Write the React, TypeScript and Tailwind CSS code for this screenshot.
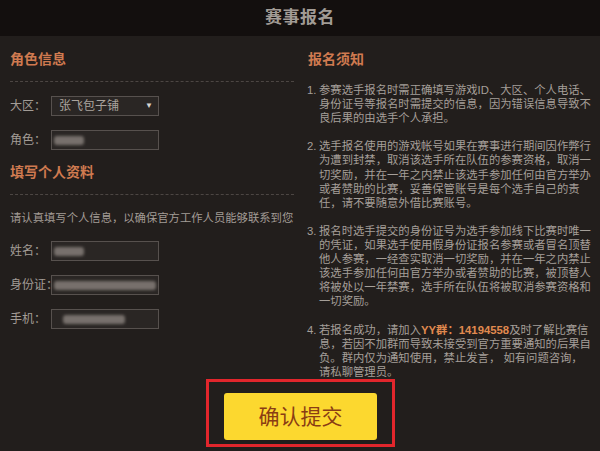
import { FC, ReactNode } from "react";

const font = "font-['Liberation_Sans','Noto_Sans_CJK_SC',sans-serif]";

const notices: ReactNode[][] = [
  [
    "参赛选手报名时需正确填写游戏ID、大区、个人电话、",
    "身份证号等报名时需提交的信息，因为错误信息导致不",
    "良后果的由选手个人承担。",
  ],
  [
    "选手报名使用的游戏帐号如果在赛事进行期间因作弊行",
    "为遭到封禁，取消该选手所在队伍的参赛资格，取消一",
    "切奖励，并在一年之内禁止该选手参加任何由官方举办",
    "或者赞助的比赛，妥善保管账号是每个选手自己的责",
    "任，请不要随意外借比赛账号。",
  ],
  [
    "报名时选手提交的身份证号为选手参加线下比赛时唯一",
    "的凭证，如果选手使用假身份证报名参赛或者冒名顶替",
    "他人参赛，一经查实取消一切奖励，并在一年之内禁止",
    "该选手参加任何由官方举办或者赞助的比赛，被顶替人",
    "将被处以一年禁赛，选手所在队伍将被取消参赛资格和",
    "一切奖励。",
  ],
  [
    <>
      若报名成功，请加入
      <span className="font-bold text-[#e08a4f]">YY群：14194558</span>
      及时了解比赛信
    </>,
    "息，若因不加群而导致未接受到官方重要通知的后果自",
    "负。群内仅为通知使用，禁止发言， 如有问题咨询，",
    "请私聊管理员。",
  ],
];

const SectionTitle: FC<{ children: ReactNode; className?: string }> = ({
  children,
  className,
}) => (
  <h3
    className={`h-[20px] text-[14px] font-bold leading-[20px] text-[#cf7a50] ${className ?? ""}`}
  >
    {children}
  </h3>
);

const Dashed: FC<{ className?: string }> = ({ className }) => (
  <div className={`border-t border-dashed border-[#4c4643] ${className ?? ""}`} />
);

const Blur: FC<{ w: number }> = ({ w }) => (
  <div
    className="h-[9px] rounded-[3px] bg-[#77706c] blur-[1.5px]"
    style={{ width: w }}
  />
);

const Field: FC<{
  label: string;
  className?: string;
  children?: ReactNode;
  h?: string;
}> = ({ label, className, children, h = "h-[20px]" }) => (
  <div className={`flex items-center ${className ?? ""}`}>
    <span className="w-[41px] whitespace-nowrap text-[12px] text-[#a29c96]">
      {label}
    </span>
    <div
      className={`relative flex ${h} w-[108px] items-center border border-[#57514e] bg-[#2a2624] px-[2px]`}
    >
      {children}
    </div>
  </div>
);

export default function App() {
  return (
    <div className={`h-[451px] w-[600px] overflow-hidden bg-[#221e1c] ${font}`}>
      <div className="flex h-[36px] items-center justify-center bg-[#130f0e]">
        <span className="text-[17px] font-bold tracking-[0.5px] text-[#a19b95]">
          赛事报名
        </span>
      </div>

      <div className="flex">
        {/* left: form */}
        <div className="ml-[10px] w-[284px]">
          <SectionTitle className="mt-[13px]">角色信息</SectionTitle>
          <Dashed className="mt-[12px]" />
          <Field label="大区：" className="mt-[14px]">
            <span className="pl-[5px] text-[12px] text-[#aaa49e]">张飞包子铺</span>
            <span className="absolute right-[5px] top-[3px] text-[8px] text-[#d8d4d0]">
              ▼
            </span>
          </Field>
          <Field label="角色：" className="mt-[14px]">
            <Blur w={30} />
          </Field>

          <SectionTitle className="mt-[12px]">填写个人资料</SectionTitle>
          <Dashed className="mt-[12px]" />
          <p className="mt-[15px] h-[16px] whitespace-nowrap text-[11.33px] leading-[16px] text-[#a29c96]">
            请认真填写个人信息，以确保官方工作人员能够联系到您
          </p>
          <Field label="姓名：" className="mt-[15px]">
            <Blur w={30} />
          </Field>
          <Field label="身份证：" className="mt-[14px]">
            <Blur w={104} />
          </Field>
          <Field label="手机：" className="mt-[14px]">
            <div className="ml-[9px]">
              <Blur w={62} />
            </div>
          </Field>
        </div>

        {/* right: notice */}
        <div className="ml-[12px] flex-1">
          <SectionTitle className="mt-[13px] pl-[2px]">报名须知</SectionTitle>
          <ol className="mt-[14px] flex flex-col gap-[14.1px] text-[11.33px] leading-[14.1px] text-[#a59f99]">
            {notices.map((lines, i) => (
              <li key={i} className="flex">
                <span className="w-[13px] shrink-0 pl-[1px]">{i + 1}.</span>
                <div className="flex flex-col">
                  {lines.map((line, j) => (
                    <span key={j} className="whitespace-nowrap">
                      {line}
                    </span>
                  ))}
                </div>
              </li>
            ))}
          </ol>
        </div>
      </div>

      <div className="flex pl-[206px]">
        <div className="border-[3px] border-[#e2262c] px-[15px] pb-[4px] pt-[11px]">
          <button className="flex h-[47px] w-[153px] items-center justify-center rounded-[3px] bg-[#fcd82f] text-[21px] text-[#8a3c14]">
            确认提交
          </button>
        </div>
      </div>
    </div>
  );
}
